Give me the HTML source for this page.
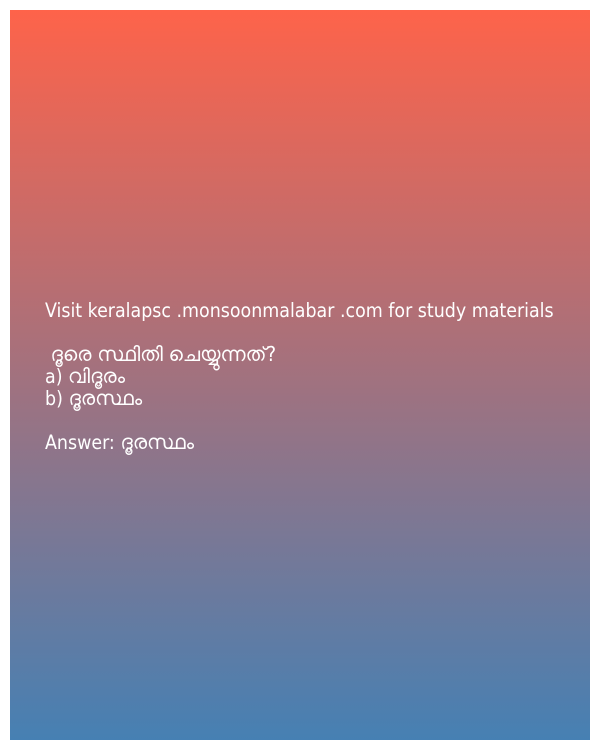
<!DOCTYPE html>
<html><head><meta charset="utf-8"><style>
html,body{margin:0;padding:0;background:#fff;width:600px;height:750px;overflow:hidden}
.box{position:absolute;left:10px;top:10px;width:580px;height:730px;background:linear-gradient(to bottom,#fe634a 0%,#4680b3 100%)}
.t{position:absolute;left:35px;top:290px;color:#fff;font-family:"DejaVu Sans Condensed","DejaVu Sans","Liberation Sans",sans-serif;font-size:19.4px;white-space:pre}
.t div{height:22px;line-height:22px;overflow:visible}
.m{font-size:20px;line-height:0}
</style></head><body>
<div class="box"><div class="t"><div>Visit keralapsc .monsoonmalabar .com for study materials</div><div></div><div> <span class="m">ദൂരെ സ്ഥിതി ചെയ്യുന്നത്?</span></div><div>a) <span class="m">വിദൂരം</span></div><div>b) <span class="m">ദൂരസ്ഥം</span></div><div></div><div>Answer: <span class="m">ദൂരസ്ഥം</span></div></div></div>
</body></html>
